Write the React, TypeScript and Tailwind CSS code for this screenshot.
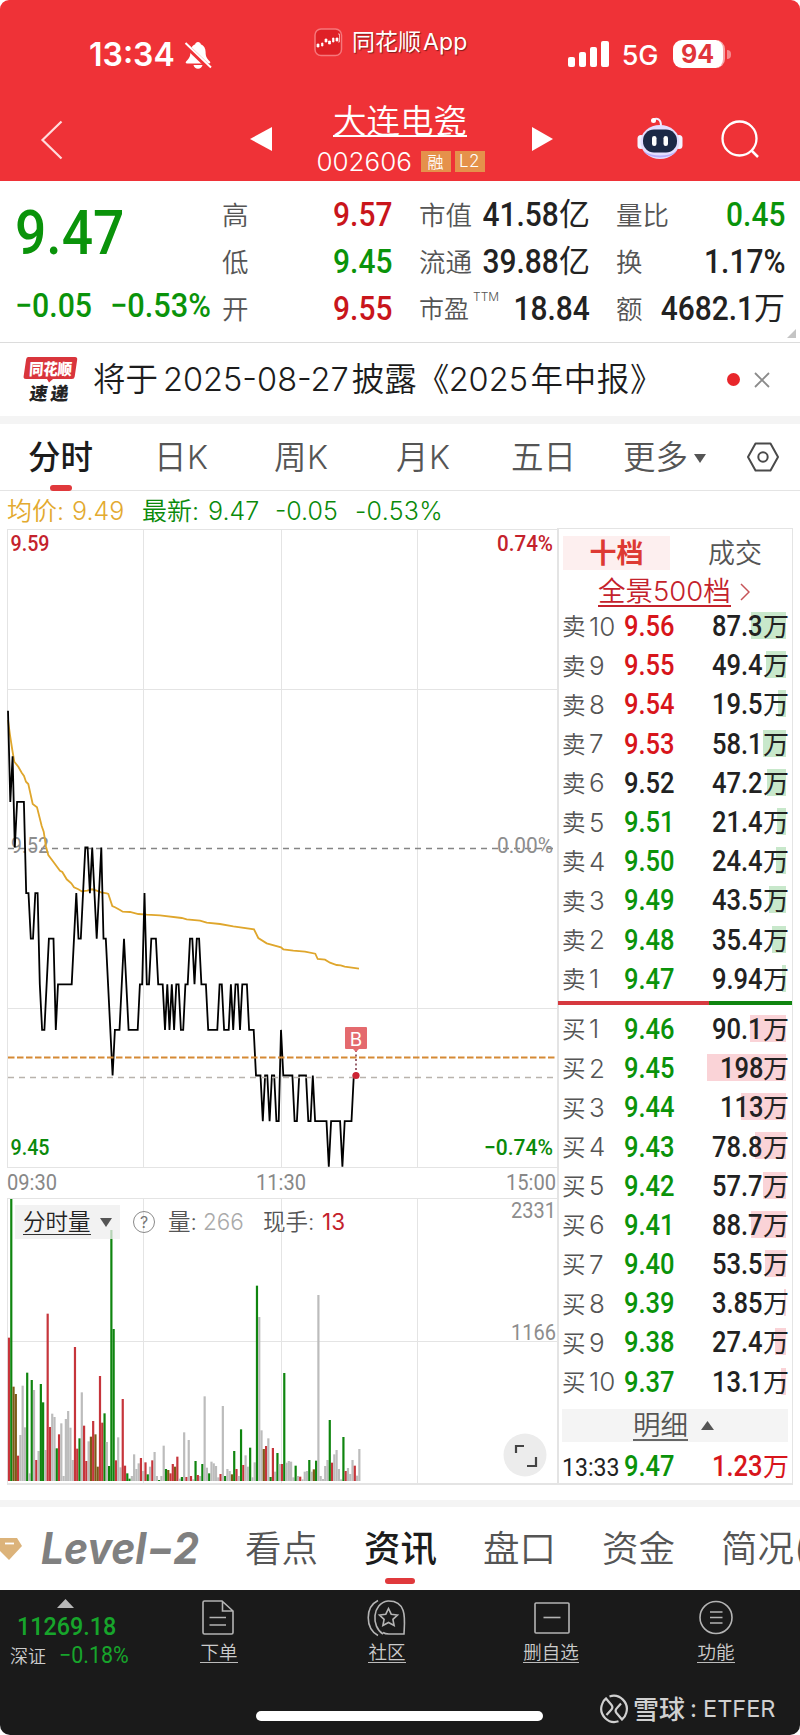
import React from "react";

const MINUTE = 2.275;

// [minute, price tick] turning points, tick is the distance from 9.52 in cents
const PRICE_POINTS: [number, number][] = [
    [0, 3], [1, 1], [2, 2], [3, 0], [4, 1], [7, 1], [8, -1], [9, -1], [10, -2], [11, -2],
    [12, -1], [13, -1], [14, -3], [15, -4], [16, -4], [18, -2], [20, -2], [21, -4], [22, -3], [28, -3],
    [30, -1], [31, -2], [32, -2], [34, 0], [35, 0], [36, -1], [37, 0], [39, -2], [41, 0], [42, -2],
    [43, -2], [46, -5], [47, -4], [49, -4], [51, -2], [53, -4], [57, -4], [58, -3], [59, -3], [60, -1],
    [61, -3], [62, -3], [63, -2], [65, -2], [66, -3], [68, -3], [69, -4], [70, -3], [71, -4], [72, -3],
    [73, -4], [74, -3], [75, -3], [76, -4], [77, -4], [78, -3], [79, -3], [80, -2], [81, -2], [82, -3],
    [83, -2], [84, -2], [85, -3], [87, -3], [88, -4], [92, -4], [93, -3], [94, -3], [95, -4], [97, -4],
    [98, -3], [99, -4], [100, -3], [101, -3], [102, -4], [103, -3], [105, -3], [106, -4], [108, -4], [109, -5],
    [111, -5], [112, -6], [113, -5], [114, -5], [115, -6], [116, -5], [117, -5], [118, -6], [119, -6], [120, -4],
    [121, -5], [125, -5], [126, -6], [127, -6], [128, -5], [131, -5], [132, -6], [133, -6], [134, -5], [135, -6],
    [140, -6], [141, -7], [142, -6], [146, -6], [147, -7], [148, -6], [151, -6], [152, -5], [153, -5],
];

const AVERAGE_LINE =
    "8,720 10,735 12.3,750 14.3,761.7 18.3,766.7 21.7,772.7 24,776 26,781.7 28.3,784 32.7,804 37,807.3 41.7,826 43.7,831.7 46,846.7 48.3,855 53.3,861.7 60,870.7 62.3,872 66.7,879.3 71.3,883.3 74,887.3 78.3,889.3 81.7,891.3 87.3,890.7 92,889.3 96.7,890.7 101,892.3 106.7,893.3 108.3,894 112.3,906 115,907.3 120,910 122.7,911.7 130,912 138.3,914 146.7,914.7 160,915.3 181.7,918 186.7,919.3 200,920.7 206.7,922.7 220,924 233.3,926.3 254,929.3 258.3,938 266.7,943.3 281,947.3 283.3,949.3 293.3,950.7 305,951.7 315.3,953.7 317.7,959 325,959.7 330,962.7 336.7,965 340.7,965.3 344.7,966.7 359,968.7";

// one entry per minute: r = up, g = down, n = flat, b = overlapping
const VOLUMES =
    "r430 g846 b283 b261 r76 n138 n286 n161 g325 n23 g303 n273 r63 n90 g291 g236 n93 r502 r162 n202 n192 g98 r140 n173 n15 n186 n210 n160 n63 r402 r97 g128 n266 r166 r60 n119 b133 r180 b140 b43 r315 r175 g203 n117 g45 g753 g456 r62 n131 n41 r246 r46 g23 g7 n15 n80 n36 n53 r69 n30 r56 g20 n43 r62 n87 n15 g3 n15 n106 g36 b33 r23 r51 b43 r73 n7 g12 n146 r12 n123 r15 n5 g60 r18 n15 g51 n254 n40 g23 n58 n53 n45 n11 r21 n225 g15 n36 n30 b20 g90 r36 n15 g155 r48 n77 n43 g100 n11 n56 g586 n492 n152 b96 r105 n128 g12 r99 n28 g84 n51 r51 g324 n55 n60 n58 n11 g46 n15 r13 n5 n28 n30 g63 n28 b35 g61 n558 n15 n6 n45 n63 g183 r55 n80 n93 n36 n5 g132 r30 n39 n21 n63 r46 n16 n96".split(" ");

const BAR_COLORS: Record<string, string> = { r: "#c6353b", g: "#0f850f", n: "#bcbcbc", b: "#7b5a17" };

const ASKS: [string, string, string][] = [
    ["10", "9.56", "87.3"],
    ["9", "9.55", "49.4"],
    ["8", "9.54", "19.5"],
    ["7", "9.53", "58.1"],
    ["6", "9.52", "47.2"],
    ["5", "9.51", "21.4"],
    ["4", "9.50", "24.4"],
    ["3", "9.49", "43.5"],
    ["2", "9.48", "35.4"],
    ["1", "9.47", "9.94"],
];

const BIDS: [string, string, string][] = [
    ["1", "9.46", "90.1"],
    ["2", "9.45", "198"],
    ["3", "9.44", "113"],
    ["4", "9.43", "78.8"],
    ["5", "9.42", "57.7"],
    ["6", "9.41", "88.7"],
    ["7", "9.40", "53.5"],
    ["8", "9.39", "3.85"],
    ["9", "9.38", "27.4"],
    ["10", "9.37", "13.1"],
];

const StatusBar = () => (
    <div className="flex h-[98px] items-center pl-[89px] text-white">
        <span className="mt-[12px] w-[95px] text-[32px] leading-none font-semibold">13:34</span>
        <svg className="mt-[12px] h-[30px] w-[28px]" viewBox="0 0 28 30">
            <path d="M14 2c-1.600 0-2.500 1-2.800 2.200C8 5.400 6.400 8.300 6.400 12c0 5-1.500 6.600-4.300 9.500-.8.900-.4 2 .9 2h22c1.300 0 1.700-1.100.9-2-2.800-2.900-4.300-4.500-4.300-9.500 0-3.700-1.600-6.600-4.800-7.800C16.500 3 15.600 2 14 2z" fill="#fff" />
            <path d="M9.500 25h9c-.5 2.400-2.300 3.700-4.500 3.700S10 27.400 9.500 25z" fill="#fff" />
            <path d="M0 3.500 26 28.500" stroke="#ef3237" strokeWidth="5" />
            <path d="M1.500 3 27 27.500" stroke="#fff" strokeWidth="2" />
        </svg>
        <div className="mb-[13px] ml-[102px] flex items-center">
            <svg className="h-[29px] w-[29px]" viewBox="0 0 29 29">
                <rect x="1" y="1" width="26.500" height="26.500" rx="6" fill="#df2026" stroke="#f6777b" strokeWidth="1.500" />
                <path d="M3 16h2v3H3zM7.500 15h1.500v3H7.500zM11 11h2v3h-2zM14.500 13h2v3h-2zM18.500 10h1.500v4h-1.500zM22 10h2v3h-2z" fill="#fff" stroke="#fff" strokeWidth=".7" />
                <path d="M24 6h1.500v8H24" fill="none" stroke="#f8b0b0" />
            </svg>
            <span className="ml-[9px] text-[23px] leading-none whitespace-nowrap [text-shadow:1px_1px_1px_#7f1d1d]">
                同花顺<span className="ml-0.5 tracking-[.2px]">App</span>
            </span>
        </div>
        <div className="mt-[9px] ml-[100px] flex items-end gap-[4px]">
            <i className="h-[10px] w-[7px] rounded-[2px] bg-white" />
            <i className="h-[15px] w-[7px] rounded-[2px] bg-white" />
            <i className="h-[20px] w-[7px] rounded-[2px] bg-white" />
            <i className="h-[26px] w-[8px] rounded-[2px] bg-white" />
        </div>
        <span className="mt-[12px] ml-[13px] w-[50px] text-[27px] leading-none font-[450]">5G</span>
        <span className="mt-[10px] ml-px flex h-[28px] w-[52px] items-center justify-center rounded-[9px] border-r-2 border-[#f6a3a5] bg-white text-[25px] leading-none font-bold text-[#e0353a]">
            94
        </span>
        <i className="mt-[10px] ml-[2px] h-[9px] w-[4px] rounded-r-full bg-[#f58a8d]" />
    </div>
);

const TitleBar = () => (
    <div className="flex h-[83px] items-start text-white">
        <svg className="mt-[22px] ml-[40px] h-[40px] w-[24px]" viewBox="0 0 24 40">
            <path d="M21.500 1.500 2.500 20l19 18.500" fill="none" stroke="#ffdcdc" strokeWidth="2.200" />
        </svg>
        <svg className="mt-[29px] ml-[186px] h-[24px] w-[22px]" viewBox="0 0 22 24">
            <path d="M22 0v24L0 12z" fill="#fff" />
        </svg>
        <div className="ml-[43px] flex w-[170px] flex-col items-center pt-[7px]">
            <h1 className="h-[32px] border-b-2 border-white text-[33.500px] leading-[32px] font-[350] whitespace-nowrap">大连电瓷</h1>
            <div className="mt-[13px] flex h-[23px] items-center">
                <span className="w-[105px] pl-px text-[26px] leading-none font-[350]">002606</span>
                <span className="flex h-[21px] w-[30px] items-center justify-center bg-[#e5914b] text-[16px] leading-none font-[350]">融</span>
                <span className="ml-[4px] flex h-[21px] w-[30px] items-center justify-center bg-[#e5914b] text-[17px] leading-none font-[350] tracking-wide">L2</span>
            </div>
        </div>
        <svg className="mt-[29px] ml-[47px] h-[24px] w-[22px]" viewBox="0 0 22 24">
            <path d="M0 0v24l21-12z" fill="#fff" />
        </svg>
        <svg className="mt-[19px] ml-[83px] h-[44px] w-[48px]" viewBox="0 0 48 44">
            <path d="M16 3c4-2.500 8-1 8 6" fill="none" stroke="#f3edff" strokeWidth="2" />
            <circle cx="16.500" cy="3.500" r="2.500" fill="#fff" />
            <rect x="0.500" y="18" width="7" height="14" rx="3.500" fill="#f5f3ff" />
            <rect x="38.500" y="18" width="7" height="14" rx="3.500" fill="#f5f3ff" />
            <ellipse cx="23" cy="25" rx="19.500" ry="17" fill="#e3deff" />
            <path d="M6.500 34c5 8.500 28 8.500 33 0-8 6-24 6-33 0z" fill="#b9aefb" />
            <rect x="6" y="12.500" width="34" height="23" rx="11" fill="#1c2947" />
            <rect x="15" y="19" width="4.500" height="10" rx="2.200" fill="#fff" />
            <rect x="26.500" y="19" width="4.500" height="10" rx="2.200" fill="#fff" />
        </svg>
        <svg className="mt-[22px] ml-[36px] h-[40px] w-[40px]" viewBox="0 0 40 40">
            <circle cx="18.500" cy="18.500" r="17" fill="none" stroke="#fff" strokeWidth="2.300" />
            <path d="m30.500 30.500 6.500 6.500" stroke="#fff" strokeWidth="2.500" />
        </svg>
    </div>
);

type StatProps = { label: React.ReactNode; value: string; unit?: string; color?: string };

const Stat = ({ label, value, unit, color = "text-[#222]" }: StatProps) => (
    <div className="flex h-[47px] items-center justify-between">
        <span className="pt-[3px] text-[26.500px] leading-none font-[350] whitespace-nowrap text-[#555]">{label}</span>
        <span className={"flex items-center leading-none " + color}>
            <span className="origin-right scale-x-[.88] font-[Roboto] text-[34px] leading-none font-medium">{value}</span>
            {unit && <span className="text-[31px] leading-none font-normal">{unit}</span>}
        </span>
    </div>
);

const Quote = () => (
    <section className="flex h-[162px] border-b border-[#dcdcdc] pt-[9px]">
        <div className="w-[222px] pl-[15px] font-[Roboto] text-[#0a930a]">
            <div className="mt-[17px] origin-left scale-x-[.89] text-[62px] leading-[52px] font-medium">9.47</div>
            <div className="mt-[19px] flex h-[54px] items-center text-[34px] leading-none font-medium">
                <span className="w-[95px] origin-left scale-x-[.89]">−0.05</span>
                <span className="w-[90px] origin-left scale-x-[.905]">−0.53%</span>
            </div>
        </div>
        <div className="w-[170px]">
            <Stat label="高" value="9.57" color="text-[#c9151b]" />
            <Stat label="低" value="9.45" color="text-[#0a930a]" />
            <Stat label="开" value="9.55" color="text-[#c9151b]" />
        </div>
        <div className="ml-[27px] w-[171px]">
            <Stat label="市值" value="41.58" unit="亿" />
            <Stat label="流通" value="39.88" unit="亿" />
            <Stat
                label={
                    <span className="flex text-[25px]">
                        市盈<sup className="top-0 -mt-1.5 ml-1 text-[12px] leading-none">TTM</sup>
                    </span>
                }
                value="18.84"
            />
        </div>
        <div className="ml-[26px] w-[169px]">
            <Stat label="量比" value="0.45" color="text-[#0a930a]" />
            <Stat label="换" value="1.17%" />
            <Stat label="额" value="4682.1" unit="万" />
        </div>
        <i className="mt-auto mb-[4px] ml-[2px] h-0 w-0 border-b-[9px] border-l-[9px] border-b-[#c4c4c4] border-l-transparent" />
    </section>
);

const Notice = () => (
    <section className="flex h-[81px] items-center border-b-8 border-[#f4f4f4] pl-[23px]">
        <svg className="h-[48px] w-[56px]" viewBox="0 0 56 48">
            <path d="M5 1h47q2.500 0 2.200 2.500l-2.500 17Q51.400 23 49 23H30l-4 3.500-2-3.500H3Q.3 23 .6 20.500l2.500-17Q3.400 1 5 1z" fill="#d9353c" />
            <text x="6" y="19" fontSize="16" fontWeight="900" fill="#fff" textLength="43" lengthAdjust="spacingAndGlyphs" transform="skewX(-4) translate(1 0)">同花顺</text>
            <text x="9" y="44" fontSize="18" fontWeight="900" fill="#222" textLength="39" transform="skewX(-8) translate(3 0)">速递</text>
        </svg>
        <p className="mt-[2px] ml-[14px] flex w-[570px] items-baseline text-[32.500px] leading-none font-[350] whitespace-nowrap text-[#1c1c1c]">
            <span className="w-[71px]">将于</span>
            <span className="w-[191px] text-[32.500px]">2025-08-27</span>
            <span className="w-[65px]">披露</span>
            <span className="w-[32px]">《</span>
            <span className="w-[83px] text-[32.500px]">2025</span>
            <span className="tracking-[.6px]">年中报》</span>
        </p>
        <i className="ml-[64px] h-[13px] w-[13px] rounded-full bg-[#e8262b]" />
        <svg className="ml-[14px] h-[16px] w-[16px]" viewBox="0 0 16 16">
            <path d="m1 1 14 14M15 1 1 15" stroke="#8b8b8b" strokeWidth="1.800" />
        </svg>
    </section>
);

const PeriodTabs = () => (
    <nav className="flex h-[67px] items-center border-b border-[#e4e4e4] pt-[2px] text-[32.500px] leading-none font-[350] whitespace-nowrap text-[#555]">
        <div className="relative ml-[28px] w-[126px] font-medium text-[#1c1c1c]">
            分时
            <i className="absolute -bottom-[17px] left-[22px] h-[6px] w-[22px] rounded-[3px] bg-[#e0393c]" />
        </div>
        <span className="w-[120px] tracking-[.5px]">日K</span>
        <span className="w-[122px] tracking-[.5px]">周K</span>
        <span className="w-[115px] tracking-[.5px]">月K</span>
        <span className="w-[112px]">五日</span>
        <span>更多</span>
        <svg className="ml-[6px] h-[9px] w-[12px]" viewBox="0 0 12 9">
            <path d="M0 0h12L6 9z" fill="#555" />
        </svg>
        <svg className="-mt-[2px] ml-[40px] h-[32px] w-[34px]" viewBox="0 0 34 32">
            <path d="M9.500 2.500h15L32 16l-7.500 13.500h-15L2 16z" fill="none" stroke="#4a4a4a" strokeWidth="2" strokeLinejoin="round" />
            <circle cx="17" cy="16" r="4.700" fill="none" stroke="#4a4a4a" strokeWidth="2" />
        </svg>
    </nav>
);

type LabelProps = { x: number; y: number; w: number; color: string; children: string; weight?: number };

const Label = ({ x, y, w, color, children, weight = 400 }: LabelProps) => (
    <text x={x} y={y} fill={color} fontSize="22.500" fontWeight={weight} fontFamily="Roboto" textLength={w} lengthAdjust="spacingAndGlyphs">
        {children}
    </text>
);

const PriceChart = () => {
    const line = PRICE_POINTS.map(([m, t]) => `${(8 + m * MINUTE).toFixed(1)},${(847.5 - t * 45.6).toFixed(1)}`).join(" ");
    return (
        <svg className="block h-[669px] w-[558px] overflow-visible" viewBox="0 528 558 669">
            <path d="M7 529.500h550M7 689.500h550M7 1008.500h550M7 1167.500h550M7.500 529v638M143.500 529v638M281.500 529v638M417.500 529v638" stroke="#e4e4e4" fill="none" />
            <path d="M8 848.500h547" stroke="#858585" strokeWidth="1.500" strokeDasharray="6 5" />
            <Label x={11} y={852.500} w={38} color="#8d8d8d">9.52</Label>
            <Label x={497} y={852.500} w={56} color="#8d8d8d">0.00%</Label>
            <polyline points={AVERAGE_LINE} fill="none" stroke="#dfa62c" strokeWidth="1.800" />
            <polyline points={line} fill="none" stroke="#000" strokeWidth="1.800" />
            <path d="M8 1077.500h547" stroke="#b9b3ad" strokeWidth="1.300" strokeDasharray="6 5" />
            <path d="M8 1057.500h547" stroke="#d58a35" strokeWidth="2" strokeDasharray="6.500 2.500" />
            <path d="M356 1050v24" stroke="#7a3040" strokeWidth="1.500" strokeDasharray="2 2.500" />
            <circle cx="356" cy="1075.500" r="3.600" fill="#cc2433" />
            <path d="M346 1027h20q1 0 1 1v20q0 1-1 1h-7l-3 3-3-3h-7q-1 0-1-1v-20q0-1 1-1z" fill="#e46a6e" />
            <text x="356" y="1045.500" textAnchor="middle" fontSize="19" fill="#fff">B</text>
            <Label x={10.500} y={551} w={39} color="#c4222c" weight={500}>9.59</Label>
            <Label x={497} y={551} w={56} color="#c4222c" weight={500}>0.74%</Label>
            <Label x={10.500} y={1154.500} w={39} color="#0a8a0a" weight={500}>9.45</Label>
            <Label x={484} y={1154.500} w={69} color="#0a8a0a" weight={500}>−0.74%</Label>
            <Label x={7} y={1190} w={50} color="#888">09:30</Label>
            <Label x={256} y={1190} w={50} color="#888">11:30</Label>
            <Label x={506} y={1190} w={50} color="#888">15:00</Label>
        </svg>
    );
};

const VolumeChart = () => (
    <div className="relative">
        <svg className="block h-[288px] w-[558px] overflow-visible" viewBox="0 1197 558 288">
            <path d="M7 1198.500h550M7 1341.500h550M7.500 1198v286M143.500 1198v286M281.500 1198v286M417.500 1198v286" stroke="#e4e4e4" fill="none" />
            <path d="M7 1484h551" stroke="#e4e4e4" strokeWidth="2" />
            {VOLUMES.map((v, i) => {
                const h = Number(v.slice(1)) / 3;
                return <rect key={i} x={7.900 + i * MINUTE} y={1481 - h} width="2.200" height={h} fill={BAR_COLORS[v[0]]} />;
            })}
            <Label x={511} y={1217.500} w={45} color="#8d8d8d">2331</Label>
            <Label x={511} y={1340} w={45} color="#8d8d8d">1166</Label>
            <circle cx="525" cy="1455" r="21.500" fill="#ececec" />
            <path d="M516 1453v-7h8M536 1457v9h-9" fill="none" stroke="#444" strokeWidth="2.200" />
        </svg>
        <div className="absolute top-[8px] left-[15px] flex h-[34px] items-center text-[22.500px] leading-none whitespace-nowrap text-[#555]">
            <div className="flex h-[34px] w-[105px] items-center bg-[#eeeeee]/75 pl-[8px]">
                <span className="border-b border-[#333] pt-[2px] font-[350] text-[#222]">分时量</span>
                <svg className="ml-[9px] h-[9px] w-[12px]" viewBox="0 0 12 9">
                    <path d="M0 0h12L6 9z" fill="#555" />
                </svg>
            </div>
            <span className="ml-[13px] flex h-[22px] w-[22px] items-center justify-center rounded-full border-[1.500px] border-[#8a8a8a] text-[16px] leading-none text-[#777]">
                ?
            </span>
            <span className="ml-[13px] w-[35px] pt-px font-[350]">量:</span>
            <span className="w-[60px] pt-px font-[350] text-[#aaa]">266</span>
            <span className="w-[59px] pt-px font-[350]">现手:</span>
            <span className="pt-px text-[#c4222c]">13</span>
        </div>
    </div>
);

const priceColor = (price: string) => {
    const p = Number(price);
    if (p > 9.52) return "text-[#d8151b]";
    return p < 9.52 ? "text-[#0a930a]" : "text-[#222]";
};

type RowProps = { side: string; row: [string, string, string]; bar: string };

const BookRow = ({ side, row: [level, price, amount], bar }: RowProps) => (
    <div className="relative flex h-[39.200px] items-center">
        <i
            className={"absolute top-[5px] right-[6px] h-[27px] " + bar}
            style={{ width: (Number(amount) / 198) * 79 }}
        />
        <span className="relative w-[27px] pt-px text-[23.500px] leading-none font-[350] text-[#555]">{side}</span>
        <span className="relative w-[35px] text-[26px] leading-none font-[350] text-[#555]">{level}</span>
        <span className={"relative origin-left scale-x-[.88] font-[Roboto] text-[29px] leading-none font-medium " + priceColor(price)}>
            {price}
        </span>
        <span className="relative mr-[3px] ml-auto flex items-center leading-none text-[#222]">
            <span className="origin-right scale-x-[.88] font-[Roboto] text-[29px] leading-none font-medium">{amount}</span>
            <span className="pt-px text-[26px] leading-none">万</span>
        </span>
    </div>
);

const OrderBook = () => (
    <aside className="h-[957px] w-[236px] border-t border-r border-b-2 border-l-2 border-[#e4e4e4] text-[27px] leading-none">
        <div className="flex h-[47px] items-center pl-[4px]">
            <span className="flex h-[34px] w-[107px] items-center justify-center bg-[#fdefef] pt-[2px] font-bold text-[#dd3a33]">十档</span>
            <span className="ml-[38px] pt-[2px] font-[350] text-[#555]">成交</span>
        </div>
        <div className="flex h-[31px] items-center pl-[39px]">
            <span className="h-[31px] border-b-2 border-[#c4222c] text-[27.500px] leading-[31px] font-[350] text-[#c4222c]">全景500档</span>
            <svg className="ml-[9px] h-[18px] w-[10px]" viewBox="0 0 10 18">
                <path d="m1 1 8 8-8 8" fill="none" stroke="#c65358" strokeWidth="1.500" />
            </svg>
        </div>
        <div className="pl-[3px]">
            {ASKS.map((row) => (
                <BookRow key={row[0]} side="卖" row={row} bar="bg-[#c8e8cb]" />
            ))}
        </div>
        <div className="mt-[2px] -ml-[1px] flex h-[4px]">
            <i className="w-[151px] bg-[#d6393f]" />
            <i className="flex-1 bg-[#0f850f]" />
        </div>
        <div className="mt-[5px] pl-[3px]">
            {BIDS.map((row) => (
                <BookRow key={row[0]} side="买" row={row} bar="bg-[#fad3d7]" />
            ))}
        </div>
        <div className="mt-[7px] ml-[3px] flex h-[33px] w-[226px] items-center bg-[#f4f4f4] pl-[71px]">
            <span className="mt-px border-b-2 border-[#666] pt-px text-[27.500px] font-[350] text-[#555]">明细</span>
            <svg className="ml-[13px] h-[9px] w-[13px]" viewBox="0 0 13 9">
                <path d="M0 9h13L6.500 0z" fill="#555" />
            </svg>
        </div>
        <div className="flex h-[50px] items-center pl-[3px]">
            <span className="w-[62px] origin-left scale-x-[.87] font-[Roboto] text-[26.500px] text-[#222]">13:33</span>
            <span className="origin-left scale-x-[.88] font-[Roboto] text-[29px] font-medium text-[#0a930a]">9.47</span>
            <span className="mr-[3px] ml-auto flex items-center text-[#d8151b]">
                <span className="origin-right scale-x-[.88] font-[Roboto] text-[29px] font-medium">1.23</span>
                <span className="pt-px text-[26px]">万</span>
            </span>
        </div>
    </aside>
);

const InfoTabs = () => (
    <nav className="flex h-[90px] items-center overflow-hidden border-t-[7px] border-[#f4f4f4] text-[36.500px] leading-none font-[350] whitespace-nowrap text-[#555] [&>*]:shrink-0">
        <svg className="h-[22px] w-[43px]" viewBox="0 0 43 22">
            <path d="M0 0h17l5 8-13 14L0 13z" fill="#dcb37a" />
            <path d="M5 5.500h9" stroke="#fff" strokeWidth="1.800" />
        </svg>
        <svg className="h-[44px] w-[202px] overflow-visible" viewBox="0 0 202 44">
            <text x="-2" y="37" fontSize="44" fontWeight="700" fontStyle="italic" fill="#808080" textLength="158" lengthAdjust="spacingAndGlyphs">Level−2</text>
        </svg>
        <span className="w-[119px] pt-[2px]">看点</span>
        <div className="relative w-[119px] pt-[2px] font-medium text-[#1c1c1c]">
            资讯
            <i className="absolute -bottom-[16px] left-[21px] h-[6px] w-[30px] rounded-[3px] bg-[#e0393c]" />
        </div>
        <span className="w-[119px] pt-[2px]">盘口</span>
        <span className="w-[119px] pt-[2px]">资金</span>
        <span className="pt-[2px]">简况(</span>
    </nav>
);

const ToolItem = ({ name, className, children }: { name: string; className: string; children: React.ReactNode }) => (
    <div className={"flex flex-col items-center pt-[8px] " + className}>
        <svg className="h-[40px] w-[42px]" viewBox="0 0 42 40" fill="none" stroke="#b4b4b4" strokeWidth="1.600">
            {children}
        </svg>
        <span className="mt-[4px] h-[21px] border-b border-[#bbb] text-[18.500px] leading-[21px] font-[350] whitespace-nowrap text-[#ccc]">{name}</span>
    </div>
);

const BottomBar = () => (
    <footer className="h-[145px] rounded-b-[10px] bg-[#1a1a1a]">
        <div className="flex h-[120px]">
            <div className="w-[130px]">
                <svg className="mt-[9px] ml-[57px] block h-[9px] w-[17px]" viewBox="0 0 17 9">
                    <path d="M0 9h17L8.500 0z" fill="#b8b8b8" />
                </svg>
                <div className="mt-[4px] ml-[17px] origin-left scale-x-[.88] font-[Roboto] text-[26.500px] leading-[28px] font-medium text-[#17a52b]">11269.18</div>
                <div className="mt-[6px] ml-[10px] flex h-[20px] items-center text-[#17a52b]">
                    <span className="w-[49px] shrink-0 pt-px text-[18px] leading-none font-[350] text-[#ccc]">深证</span>
                    <span className="origin-left scale-x-[.91] font-[Roboto] text-[23.500px] leading-none">−0.18%</span>
                </div>
            </div>
            <ToolItem name="下单" className="ml-[59px] w-[60px]">
                <path d="M5 4.500q0-1.500 1.500-1.500H24l11 10v21.500q0 1.500-1.500 1.500h-27Q5 36 5 34.500zM24.500 3v10H35M11.500 19.500H28M11.500 27H28" />
            </ToolItem>
            <ToolItem name="社区" className="ml-[108px] w-[60px]">
                <path d="M12 2.500C-1 9-1 30 12 37.500M17 36C5 29 6 5 22 3c20-.5 16.500 20 16 33H23q-4 0-6-1.500" />
                <path d="m22.500 10.500 2.700 5.700 6.300.8-4.600 4.300 1.200 6.200-5.600-3-5.600 3 1.200-6.200-4.600-4.300 6.300-.8z" />
            </ToolItem>
            <ToolItem name="删自选" className="ml-[104px] w-[60px]">
                <rect x="5" y="5" width="34" height="30" rx="1" />
                <path d="M13.500 19.500h17" />
            </ToolItem>
            <ToolItem name="功能" className="ml-[105px] w-[60px]">
                <circle cx="21" cy="19.500" r="16" />
                <path d="M15 14h12.500M15 19.500h12.500M15 25h12.500" />
            </ToolItem>
        </div>
        <div className="-mt-[16px] flex h-[30px] items-center">
            <i className="mt-[13px] ml-[256px] h-[10px] w-[287px] rounded-full bg-white" />
            <svg className="-mt-px ml-[56px] h-[30px] w-[30px]" viewBox="0 0 30 30" fill="none" stroke="#d0d0d0" strokeWidth="2.200">
                <path d="M10.500 2.500A13.200 13.200 0 0 1 27.200 19Q26 23.500 23 25.500L17.500 19Q15.500 16.500 18 14l4-4.500" />
                <path d="M19.500 27.300A13.200 13.200 0 0 1 2.800 11Q4 6.500 7 4.500L12.500 11q2 2.500-.5 5l-4.500 5" />
            </svg>
            <span className="mt-[2px] ml-[4px] text-[26px] leading-none font-medium text-[#d0d0d0]">雪球</span>
            <span className="ml-[5px] w-[13px] text-[24px] leading-none text-[#d0d0d0]">:</span>
            <span className="text-[23.500px] leading-none text-[#d0d0d0]">ETFER</span>
        </div>
    </footer>
);

const App = () => {
    return (
        <main className="h-[1735px] w-[800px] overflow-hidden bg-white font-[Inter,'Noto_Sans_CJK_SC',sans-serif]">
            <header className="h-[181px] rounded-t-[9px] bg-[#ef3237]">
                <StatusBar />
                <TitleBar />
            </header>
            <Quote />
            <Notice />
            <PeriodTabs />
            <div className="flex h-[37px] items-center pt-[4px] pl-[7px] text-[25px] leading-none font-[350] whitespace-nowrap text-[#0a8a0a]">
                <span className="w-[65px] text-[#e3aa2f]">均价:</span>
                <span className="w-[70px] text-[#e3aa2f]">9.49</span>
                <span className="w-[66px]">最新:</span>
                <span className="w-[67px]">9.47</span>
                <span className="w-[80px]">-0.05</span>
                <span className="tracking-[.3px]">-0.53%</span>
            </div>
            <div className="flex h-[972px] items-start">
                <div className="w-[557px]">
                    <PriceChart />
                    <VolumeChart />
                </div>
                <OrderBook />
            </div>
            <InfoTabs />
            <BottomBar />
        </main>
    );
};

export default App;
